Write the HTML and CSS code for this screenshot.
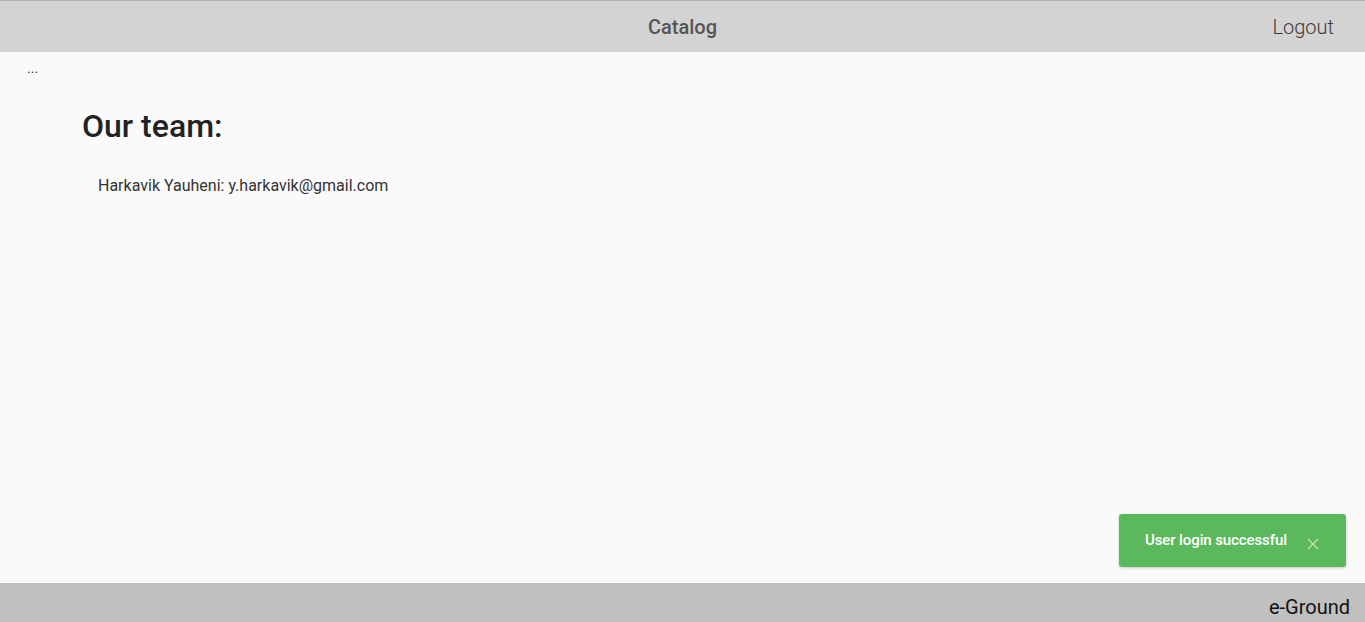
FILE: index.html
```html
<!DOCTYPE html>
<html>
<head>
<meta charset="utf-8">
<link rel="stylesheet" href="styles.css">
</head>
<body>
<div class="app">
  <header class="header">
    <div class="header-side"></div>
    <div class="header-title">Catalog</div>
    <div class="header-side right"><a class="logout">Logout</a></div>
  </header>
  <main class="main">
    <div class="dots">...</div>
    <section class="team">
      <h1 class="team-title">Our team:</h1>
      <p class="member">Harkavik Yauheni: y.harkavik@gmail.com</p>
    </section>
  </main>
  <footer class="footer">e-Ground</footer>
</div>
<div class="toast">
  <span class="toast-text">User login successful</span>
  <span class="toast-close">
    <svg width="12" height="12" viewBox="0 0 12 12"><path d="M1 1L11 11M11 1L1 11" stroke="#b8e6b8" stroke-width="1.4" fill="none"/></svg>
  </span>
</div>
</body>
</html>
```
FILE: styles.css
```css
* { box-sizing: border-box; }
html, body { margin: 0; padding: 0; height: 100%; }
body {
  font-family: Roboto, "Liberation Sans", sans-serif;
  background: #fafafa;
  overflow: hidden;
}
.app {
  display: flex;
  flex-direction: column;
  height: 622px;
}
.header {
  height: 52px;
  border-top: 1px solid #b2b2b2;
  background: #d3d3d3;
  display: flex;
  align-items: center;
  padding-right: 31px;
  padding-left: 31px;
}
.header-side { flex: 1; display: flex; }
.header-side.right { justify-content: flex-end; }
.header-title {
  font-size: 20px;
  font-weight: 500;
  color: #555;
  padding-top: 1px;
}
.logout {
  font-size: 20px;
  font-weight: 300;
  color: #3a3a3a;
  padding-top: 1px;
}
.main {
  flex: 1;
  padding: 8px 0 0 27px;
}
.dots {
  font-size: 14px;
  color: #333;
  line-height: 16px;
}
.team {
  padding-left: 55px;
  padding-top: 30px;
}
.team-title {
  margin: 0;
  font-size: 32px;
  font-weight: 500;
  color: #222;
  line-height: 40px;
}
.member {
  margin: 30px 0 0 16px;
  font-size: 16px;
  color: #333;
  line-height: 20px;
}
.footer {
  height: 39px;
  background: #c0c0c0;
  display: flex;
  align-items: center;
  justify-content: flex-end;
  padding-right: 15px;
  font-size: 20px;
  color: #111;
  padding-top: 9px;
  padding-bottom: 0;
}
.toast {
  position: absolute;
  left: 1119px;
  top: 514px;
  width: 227px;
  height: 53px;
  background: #5cb85c;
  border-radius: 3px;
  box-shadow: 0 1px 3px rgba(0,0,0,0.2);
  display: flex;
  align-items: center;
  padding-left: 26px;
  color: #fff;
}
.toast-text {
  font-size: 15px;
  font-weight: 500;
  letter-spacing: -0.1px;
  padding-bottom: 2px;
}
.toast-close {
  margin-left: 20px;
  display: flex;
  padding-top: 6px;
}
```
